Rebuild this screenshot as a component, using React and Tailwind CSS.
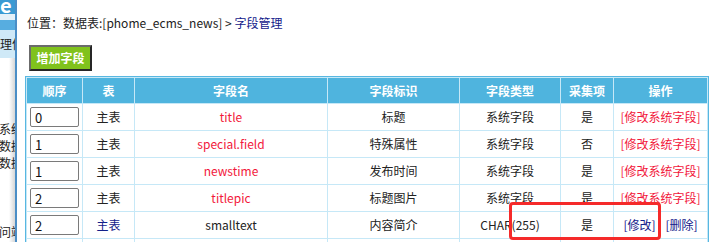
const rows = [
  { order: '0', table: '主表', name: 'title', label: '标题', type: '系统字段', collect: '是', sys: true },
  { order: '1', table: '主表', name: 'special.field', label: '特殊属性', type: '系统字段', collect: '否', sys: true },
  { order: '1', table: '主表', name: 'newstime', label: '发布时间', type: '系统字段', collect: '是', sys: true },
  { order: '2', table: '主表', name: 'titlepic', label: '标题图片', type: '系统字段', collect: '是', sys: true },
  { order: '2', table: '主表', name: 'smalltext', label: '内容简介', type: 'CHAR(255)', collect: '是', sys: false },
  { order: '3', table: '副表', name: 'newstext', label: '新闻正文', type: 'MEDIUMTEXT', collect: '是', sys: false },
];

function Sidebar() {
  return (
    <div className="w-[17px] shrink-0 flex flex-col overflow-hidden bg-gradient-to-r from-white from-60% to-[#d6d6d6] border-r-2 border-[#4b8ec6] text-[12px] text-[#222] whitespace-nowrap">
      <div className="h-[14px] bg-[#3a9ad3] overflow-hidden">
        <div className="text-[20px] font-bold text-white leading-none -mt-[5px]">e C</div>
      </div>
      <div className="h-[6px] bg-[#e4f0f8]" />
      <div className="h-[10px] bg-[#57ade0]" />
      <div className="h-[28px] bg-[#cfe9f7] flex items-center">
        <span className="leading-none">理信</span>
      </div>
      <div className="mt-[62px] leading-[17px] -ml-[1px]">
        <div>系统</div>
        <div>数据</div>
        <div>数据</div>
      </div>
      <div className="mt-[52px] leading-[17px] -ml-[1px]">问端</div>
    </div>
  );
}

export default function App() {
  return (
    <div className="relative flex w-[713px] h-[242px] overflow-hidden bg-white font-['Noto_Sans_CJK_SC',sans-serif] text-[12px] text-[#222]">
      <Sidebar />

      <div className="flex-1 min-w-0">
        {/* 位置 */}
        <div className="mt-[16px] ml-[10px] leading-[14px] whitespace-nowrap">
          位置：数据表:[phome_ecms_news] &gt; <span className="text-[#13208a]">字段管理</span>
        </div>

        <button className="mt-[15px] ml-[12px] h-[26px] w-[63px] flex items-center justify-center bg-[#80c21c] border-2 border-t-[#6b6b6b] border-l-[#6b6b6b] border-r-[#262626] border-b-[#262626] text-white font-bold text-[12px]">
          增加字段
        </button>

        <table className="mt-[5px] ml-[8px] w-[684px] table-fixed border-separate border-spacing-[1px] bg-[#c6e8f7] border border-[#58b7e1]">
          <colgroup>
            <col className="w-[55px]" />
            <col className="w-[51px]" />
            <col className="w-[192px]" />
            <col className="w-[131px]" />
            <col className="w-[100px]" />
            <col className="w-[52px]" />
            <col className="w-[93px]" />
          </colgroup>
          <thead>
            <tr className="bg-[#4fb4de] text-white font-bold">
              <th className="h-[25px] p-0">顺序</th>
              <th className="p-0">表</th>
              <th className="p-0">字段名</th>
              <th className="p-0">字段标识</th>
              <th className="p-0">字段类型</th>
              <th className="p-0">采集项</th>
              <th className="p-0">操作</th>
            </tr>
          </thead>
          <tbody>
            {rows.map((r, i) => (
              <tr key={i} className="bg-white text-center">
                <td className="h-[26px] p-0 text-left">
                  <input
                    readOnly
                    defaultValue={r.order}
                    className="ml-[3px] block w-[49px] h-[20px] border border-[#7a7a7a] rounded-[2px] px-[4px] text-[13px] text-[#111] outline-none"
                  />
                </td>
                <td className={r.sys ? 'p-0' : 'p-0 text-[#13208a]'}>{r.table}</td>
                <td className={r.sys ? 'p-0 text-[#f2173b]' : 'p-0'}>{r.name}</td>
                <td className="p-0">{r.label}</td>
                <td className="p-0">{r.type}</td>
                <td className="p-0">{r.collect}</td>
                <td className="p-0 whitespace-nowrap">
                  {r.sys ? (
                    <span className="text-[#f2173b]">[修改系统字段]</span>
                  ) : (
                    <span className="text-[#13208a]">
                      [修改]<span className="inline-block w-[10px]" />[删除]
                    </span>
                  )}
                </td>
              </tr>
            ))}
          </tbody>
        </table>
      </div>

      {/* 标注框 */}
      <div className="absolute left-[509px] top-[202px] w-[152px] h-[38px] border-[3px] border-[#f52a2a] rounded-[4px] pointer-events-none" />
    </div>
  );
}
